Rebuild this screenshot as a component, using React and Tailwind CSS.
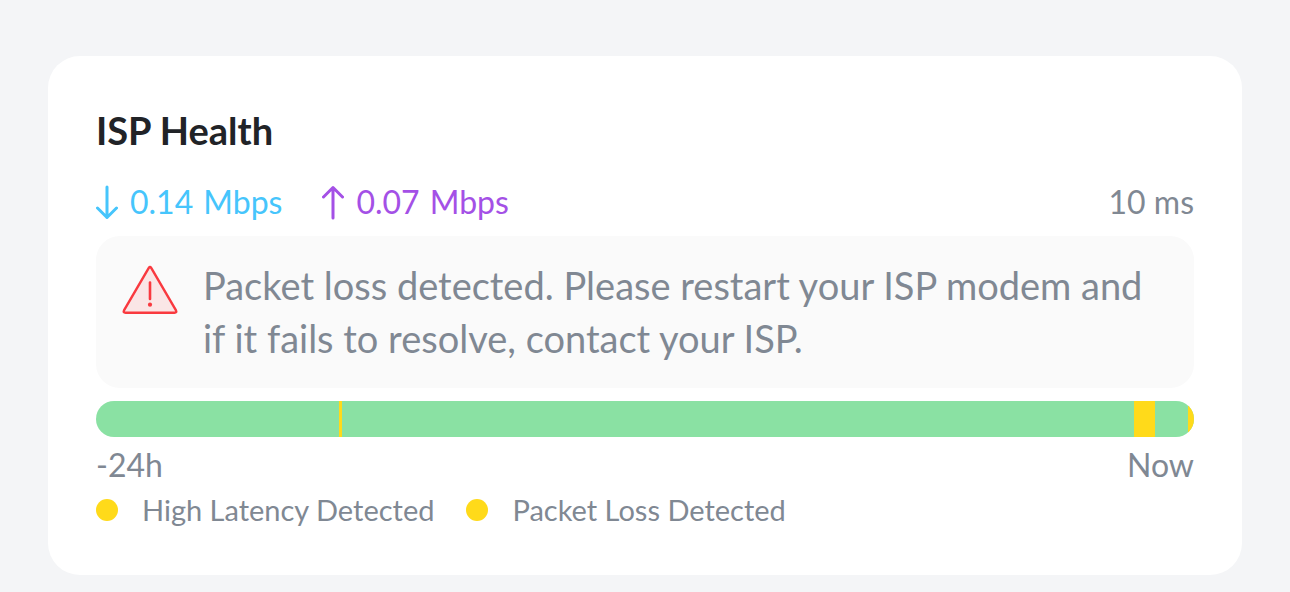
const segments = [
  { start: 22.1, width: 0.3 },
  { start: 94.5, width: 1.95 },
  { start: 99.45, width: 0.55 },
];

const legend = ["High Latency Detected", "Packet Loss Detected"];

function Arrow({ up = false }) {
  return (
    <svg viewBox="0 0 22 36" className="h-9 w-[22px] shrink-0" fill="none" stroke="currentColor" strokeWidth="3" strokeLinecap="round" strokeLinejoin="round" aria-hidden="true">
      <path d={up ? "M11 34V3.5M1.5 13 11 3.5 20.5 13" : "M11 3V33.5M1.5 24 11 33.5 20.5 24"} />
    </svg>
  );
}

function Warning() {
  return (
    <svg viewBox="0 0 56 50" className="mt-1.5 h-[50px] w-14 shrink-0" fill="none" stroke="#f9393f" strokeWidth="2.4" strokeLinecap="round" strokeLinejoin="round" aria-hidden="true">
      <path d="M26.8 2.9Q28 1.1 29.2 2.9L54 45.4Q55.1 47.8 52.5 47.8H3.5Q.9 47.8 2 45.4Z" fill="#fae6e6" />
      <path d="M28 17.5V34" strokeWidth="2.6" />
      <circle cx="28" cy="39.7" r="2.1" fill="#f9393f" stroke="none" />
    </svg>
  );
}

export default function App() {
  return (
    <main className="min-h-screen bg-[#f4f5f7] px-12 pt-14 pb-4 font-['Lato',sans-serif] text-[#808893]">
      <section className="rounded-[32px] bg-white p-12">
        <h1 className="text-[38px] leading-[52px] font-bold text-[#212327]">ISP Health</h1>

        <div className="mt-[26px] flex items-center justify-between text-[32px] leading-10">
          <div className="flex gap-10">
            <div className="flex items-center gap-3 text-[#46c5fc]">
              <Arrow />
              <span className="flex gap-2.5"><span>0.14</span><span>Mbps</span></span>
            </div>
            <div className="flex items-center gap-3 text-[#a450e6]">
              <Arrow up />
              <span className="flex gap-2.5"><span>0.07</span><span>Mbps</span></span>
            </div>
          </div>
          <span>10 ms</span>
        </div>

        <div className="mt-3.5 flex gap-[25px] rounded-3xl bg-[#fafafa] px-[26px] py-[23px]">
          <Warning />
          <p className="text-[38px] leading-[53px]">
            Packet loss detected. Please restart your ISP modem and if it fails to resolve, contact your ISP.
          </p>
        </div>

        <div className="relative mt-[13px] h-9 overflow-hidden rounded-full bg-[#8ae1a3]">
          {segments.map((s) => (
            <div key={s.start} className="absolute inset-y-0 bg-[#ffda1a]" style={{ left: `${s.start}%`, width: `${s.width}%` }} />
          ))}
        </div>

        <div className="mt-2 flex justify-between text-[32px] leading-10">
          <span>-24h</span>
          <span>Now</span>
        </div>

        <ul className="mt-2 flex gap-8 text-[29px] leading-[34px]">
          {legend.map((label) => (
            <li key={label} className="flex items-center gap-6">
              <span className="size-[22px] rounded-full bg-[#ffda1a]" />
              {label}
            </li>
          ))}
        </ul>
      </section>
    </main>
  );
}
